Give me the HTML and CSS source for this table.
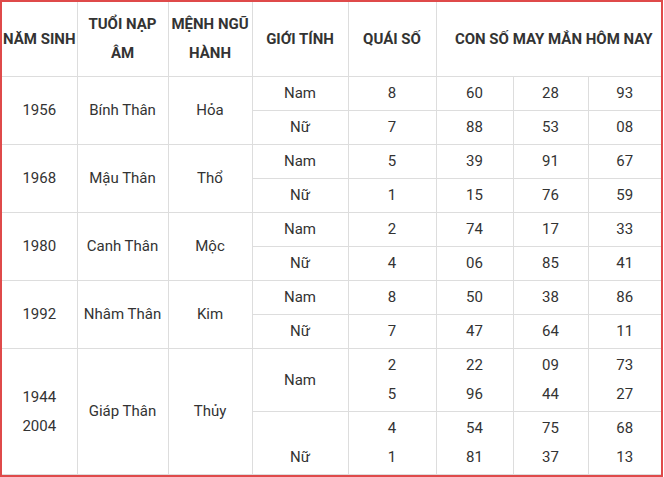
FILE: index.html
```html
<!DOCTYPE html>
<html lang="vi">
<head>
<meta charset="utf-8">
<link rel="stylesheet" href="styles.css">
</head>
<body>
<div class="frame">
<div class="tbl">
<table>
<colgroup>
<col class="c1"><col class="c2"><col class="c3"><col class="c4"><col class="c5"><col class="c6"><col class="c7"><col class="c8">
</colgroup>
<thead>
<tr><th class="nowrap">NĂM SINH</th><th>TUỔI NẠP ÂM</th><th>MỆNH NGŨ HÀNH</th><th>GIỚI TÍNH</th><th>QUÁI SỐ</th><th colspan="3" class="lucky">CON SỐ MAY MẮN HÔM NAY</th></tr>
</thead>
<tbody>
<tr><td rowspan="2">1956</td><td rowspan="2">Bính Thân</td><td rowspan="2">Hỏa</td><td>Nam</td><td>8</td><td>60</td><td>28</td><td>93</td></tr>
<tr><td>Nữ</td><td>7</td><td>88</td><td>53</td><td>08</td></tr>
<tr><td rowspan="2">1968</td><td rowspan="2">Mậu Thân</td><td rowspan="2">Thổ</td><td>Nam</td><td>5</td><td>39</td><td>91</td><td>67</td></tr>
<tr><td>Nữ</td><td>1</td><td>15</td><td>76</td><td>59</td></tr>
<tr><td rowspan="2">1980</td><td rowspan="2">Canh Thân</td><td rowspan="2">Mộc</td><td>Nam</td><td>2</td><td>74</td><td>17</td><td>33</td></tr>
<tr><td>Nữ</td><td>4</td><td>06</td><td>85</td><td>41</td></tr>
<tr><td rowspan="2">1992</td><td rowspan="2">Nhâm Thân</td><td rowspan="2">Kim</td><td>Nam</td><td>8</td><td>50</td><td>38</td><td>86</td></tr>
<tr><td>Nữ</td><td>7</td><td>47</td><td>64</td><td>11</td></tr>
<tr><td rowspan="2">1944<br>2004</td><td rowspan="2">Giáp Thân</td><td rowspan="2">Thủy</td><td>Nam</td><td>2<br>5</td><td>22<br>96</td><td>09<br>44</td><td>73<br>27</td></tr>
<tr><td>&nbsp;<br>Nữ</td><td>4<br>1</td><td>54<br>81</td><td>75<br>37</td><td>68<br>13</td></tr>
</tbody>
</table>
</div>
</div>
</body>
</html>
```

FILE: styles.css
```css
html, body {
  margin: 0;
  padding: 0;
  background: #fff;
}
.frame {
  box-sizing: border-box;
  width: 663px;
  height: 477px;
  border: 2px solid #df4a4a;
  overflow: hidden;
}
.tbl {
  border-bottom: 1px solid #dddddd;
}
table {
  width: 659px;
  table-layout: fixed;
  border-collapse: collapse;
  border-style: hidden;
  font-family: Roboto, "Liberation Sans", sans-serif;
  font-size: 15px;
  color: #333;
}
.c1 { width: 75px; }
.c2 { width: 91px; }
.c3 { width: 84px; }
.c4 { width: 96px; }
.c5 { width: 88px; }
.c6 { width: 77px; }
.c7 { width: 75px; }
.c8 { width: 73px; }
th, td {
  border: 1px solid #dddddd;
  text-align: center;
  vertical-align: middle;
  line-height: 29px;
  padding: 2px 2px;
}
th {
  font-weight: 700;
  color: #333;
  padding: 8px 0;
}
th.lucky {
  padding-left: 10px;
}
.nowrap {
  white-space: nowrap;
}
```
